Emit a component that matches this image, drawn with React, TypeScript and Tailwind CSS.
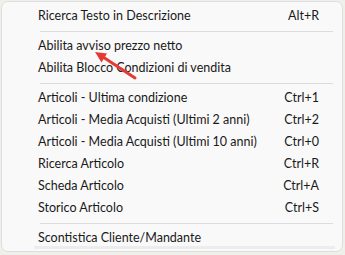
import type React from "react";

type Item = { label: string; shortcut?: string } | "sep";

const items: Item[] = [
  { label: "Ricerca Testo in Descrizione", shortcut: "Alt+R" },
  "sep",
  { label: "Abilita avviso prezzo netto" },
  { label: "Abilita Blocco Condizioni di vendita" },
  "sep",
  { label: "Articoli - Ultima condizione", shortcut: "Ctrl+1" },
  { label: "Articoli - Media Acquisti (Ultimi 2 anni)", shortcut: "Ctrl+2" },
  { label: "Articoli - Media Acquisti (Ultimi 10 anni)", shortcut: "Ctrl+0" },
  { label: "Ricerca Articolo", shortcut: "Ctrl+R" },
  { label: "Scheda Articolo", shortcut: "Ctrl+A" },
  { label: "Storico Articolo", shortcut: "Ctrl+S" },
  "sep",
  { label: "Scontistica Cliente/Mandante" },
];

const MenuRow: React.FC<{ label: string; shortcut?: string }> = ({
  label,
  shortcut,
}) => (
  <div className="flex h-[22px] items-center justify-between pr-[23px] pl-[36px]">
    <span>{label}</span>
    {shortcut && <span>{shortcut}</span>}
  </div>
);

export default function App() {
  return (
    <div className="h-[255px] w-[345px] bg-[#eef0e9] p-px">
      <div
        className="relative h-[251px] w-[342px] overflow-hidden rounded-[7px] border border-[#dedede] bg-[#f9f9f9] pt-[3px] text-[12.5px] text-[#1a1a1a]"
        style={{ fontFamily: '"Segoe UI", Lato, sans-serif' }}
      >
        {items.map((item, i) =>
          item === "sep" ? (
            <div className="mt-[4px] mr-[9px] mb-[3px] ml-[38px] h-px bg-[#dcdcdc]" key={i} />
          ) : (
            <MenuRow key={i} label={item.label} shortcut={item.shortcut} />
          )
        )}
        <div className="-mt-[3px] mr-[7px] ml-[32px] h-[3px] bg-[#ececec]" />

        <svg
          aria-hidden="true"
          className="absolute top-0 left-0"
          height="100"
          viewBox="0 0 140 100"
          width="140"
        >
          <title>Arrow</title>
          <line
            stroke="#e53935"
            strokeLinecap="round"
            strokeWidth="3"
            x1="133"
            x2="101"
            y1="76"
            y2="55"
          />
          <polygon fill="#e53935" points="93,50 105,51.5 99.5,60.5" />
        </svg>
      </div>
    </div>
  );
}
